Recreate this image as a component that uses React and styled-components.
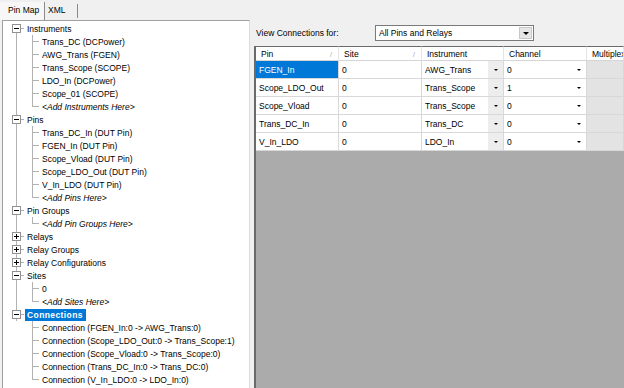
import React from "react"
import styled, { createGlobalStyle, css } from "styled-components"

const GlobalStyle = createGlobalStyle`
  html, body {
    margin: 0;
    padding: 0;
  }
  body {
    background: #f0f0f0;
    font-family: "Liberation Sans", Arial, sans-serif;
    font-size: 8.5px;
    color: #000;
    overflow: hidden;
  }
`

const tree = [
  {
    label: "Instruments",
    open: true,
    children: [
      "Trans_DC (DCPower)",
      "AWG_Trans (FGEN)",
      "Trans_Scope (SCOPE)",
      "LDO_In (DCPower)",
      "Scope_01 (SCOPE)",
      { label: "<Add Instruments Here>", add: true },
    ],
  },
  {
    label: "Pins",
    open: true,
    children: [
      "Trans_DC_In (DUT Pin)",
      "FGEN_In (DUT Pin)",
      "Scope_Vload (DUT Pin)",
      "Scope_LDO_Out (DUT Pin)",
      "V_In_LDO (DUT Pin)",
      { label: "<Add Pins Here>", add: true },
    ],
  },
  {
    label: "Pin Groups",
    open: true,
    children: [{ label: "<Add Pin Groups Here>", add: true }],
  },
  { label: "Relays", open: false, children: [] },
  { label: "Relay Groups", open: false, children: [] },
  { label: "Relay Configurations", open: false, children: [] },
  {
    label: "Sites",
    open: true,
    children: ["0", { label: "<Add Sites Here>", add: true }],
  },
  {
    label: "Connections",
    open: true,
    selected: true,
    children: [
      "Connection (FGEN_In:0 -> AWG_Trans:0)",
      "Connection (Scope_LDO_Out:0 -> Trans_Scope:1)",
      "Connection (Scope_Vload:0 -> Trans_Scope:0)",
      "Connection (Trans_DC_In:0 -> Trans_DC:0)",
      "Connection (V_In_LDO:0 -> LDO_In:0)",
    ],
  },
]

const connections = [
  { pin: "FGEN_In", site: "0", instrument: "AWG_Trans", channel: "0" },
  { pin: "Scope_LDO_Out", site: "0", instrument: "Trans_Scope", channel: "1" },
  { pin: "Scope_Vload", site: "0", instrument: "Trans_Scope", channel: "0" },
  { pin: "Trans_DC_In", site: "0", instrument: "Trans_DC", channel: "0" },
  { pin: "V_In_LDO", site: "0", instrument: "LDO_In", channel: "0" },
]

const LINE = "#b2b2b2"

const Page = styled.div`
  width: 624px;
  height: 388px;
  display: flex;
  flex-direction: column;
  overflow: hidden;
`

/* - - - Tabs - - - */

const TabBar = styled.div`
  display: flex;
  height: 20px;
  flex: none;
`

const Tab = styled.div`
  box-sizing: border-box;
  width: ${p => p.$w}px;
  padding-left: ${p => p.$pad}px;
  margin-top: ${p => (p.$active ? 2 : 4)}px;
  height: ${p => (p.$active ? 18 : 14)}px;
  line-height: ${p => (p.$active ? 16 : 12)}px;
  border-right: 1px solid #8a8a8a;
  background: ${p => (p.$active ? "#f7f7f7" : "#f0f0f0")};
`

/* - - - Main - - - */

const Main = styled.div`
  flex: 1;
  display: flex;
  min-height: 0;
`

const TreePanel = styled.div`
  box-sizing: border-box;
  width: 248px;
  margin-left: 2px;
  flex: none;
  background: #fff;
  border-top: 1px solid #a0a0a0;
  border-left: 1px solid #a0a0a0;
  border-right: 1px solid #dcdcdc;
  padding-top: 1px;
  overflow: hidden;
`

const Row = styled.div`
  display: flex;
  align-items: center;
  height: 13px;
  padding-left: 5px;
  white-space: nowrap;
`

const Guide = styled.span`
  position: relative;
  flex: none;
  width: 16px;
  height: 13px;
  ${p =>
    p.$line &&
    css`
      &::before {
        content: "";
        position: absolute;
        left: 8px;
        top: 0;
        bottom: 0;
        border-left: 1px solid ${LINE};
      }
    `}
`

const Branch = styled.span`
  position: relative;
  flex: none;
  width: 16px;
  height: 13px;
  &::before {
    content: "";
    position: absolute;
    left: 8px;
    top: 0;
    height: ${p => (p.$last ? "7px" : "13px")};
    border-left: 1px solid ${LINE};
  }
  &::after {
    content: "";
    position: absolute;
    left: 8px;
    top: 6px;
    width: 7px;
    border-top: 1px solid ${LINE};
  }
`

const RootCell = styled.span`
  position: relative;
  flex: none;
  width: 16px;
  height: 13px;
  &::before {
    content: "";
    position: absolute;
    left: 8px;
    top: ${p => (p.$first ? "6px" : "0")};
    height: ${p => (p.$last && !p.$open ? "7px" : p.$first ? "7px" : "13px")};
    border-left: 1px solid ${LINE};
  }
  &::after {
    content: "";
    position: absolute;
    left: 12px;
    top: 6px;
    width: 4px;
    border-top: 1px solid ${LINE};
  }
`

const Toggle = styled.span`
  position: absolute;
  z-index: 1;
  left: 4px;
  top: 2px;
  box-sizing: border-box;
  width: 9px;
  height: 9px;
  border: 1px solid #919191;
  background: #fff;
  &::before {
    content: "";
    position: absolute;
    left: 1px;
    top: 3px;
    width: 5px;
    height: 1px;
    background: #000;
  }
  ${p =>
    !p.$open &&
    css`
      &::after {
        content: "";
        position: absolute;
        left: 3px;
        top: 1px;
        width: 1px;
        height: 5px;
        background: #000;
      }
    `}
`

const Label = styled.span`
  padding: 0 2px;
  line-height: 12px;
  margin-left: ${p => (p.$root ? 1 : 0)}px;
  font-style: ${p => (p.$add ? "italic" : "normal")};
  ${p =>
    p.$selected &&
    css`
      background: #0078d7;
      color: #fff;
      font-weight: bold;
      letter-spacing: 0.4px;
      padding-right: 3px;
    `}
`

/* - - - Right side - - - */

const RightPanel = styled.div`
  flex: 1;
  margin-left: 4px;
  display: flex;
  flex-direction: column;
  min-width: 0;
`

const FilterRow = styled.div`
  display: flex;
  align-items: center;
  height: 26px;
  flex: none;
  padding-left: 2px;
`

const FilterLabel = styled.span`
  width: 119px;
  flex: none;
`

const Combo = styled.div`
  box-sizing: border-box;
  width: 159px;
  height: 16px;
  border: 1px solid #7a7a7a;
  background: #fff;
  display: flex;
  align-items: center;
  padding: 1px;
`

const ComboText = styled.span`
  flex: 1;
  padding-left: 2px;
`

const ComboButton = styled.span`
  box-sizing: border-box;
  width: 13px;
  height: 12px;
  background: #e6e6e6;
  border: 1px solid #c8c8c8;
  display: flex;
  align-items: center;
  justify-content: center;
`

const Arrow = styled.span`
  width: 0;
  height: 0;
  border-left: ${p => p.$size}px solid transparent;
  border-right: ${p => p.$size}px solid transparent;
  border-top: ${p => p.$size}px solid #000;
`

const Grid = styled.div`
  flex: 1;
  display: grid;
  grid-template-columns: 83px 83px 82px 83px 1fr;
  grid-auto-rows: 18px;
  grid-template-rows: 15px;
  align-content: start;
  background: #ababab;
  border-left: 2px solid #6a6a6a;
  overflow: hidden;
`

const HeadCell = styled.div`
  box-sizing: border-box;
  display: flex;
  align-items: center;
  justify-content: space-between;
  padding: 1px 6px 0 5px;
  background: #fff;
  border-top: 1px solid #6a6a6a;
  border-right: 1px solid #e3e3e3;
  border-bottom: 1px solid #d5d5d5;
  white-space: nowrap;
  overflow: hidden;
`

const SortGlyph = styled.span`
  color: #a8a8a8;
  font-size: 7px;
`

const Cell = styled.div`
  box-sizing: border-box;
  display: flex;
  align-items: center;
  padding-left: 3px;
  background: ${p => (p.$selected ? "#0078d7" : p.$disabled ? "#e3e3e3" : "#fff")};
  color: ${p => (p.$selected ? "#fff" : "#000")};
  border-right: 1px solid #d8d8d8;
  border-bottom: 1px solid #d8d8d8;
  white-space: nowrap;
  overflow: hidden;
`

const CellText = styled.span`
  flex: 1;
`

const CellButton = styled.span`
  flex: none;
  width: 15px;
  align-self: stretch;
  display: flex;
  align-items: center;
  justify-content: center;
  background: ${p => (p.$shaded ? "#ededed" : "transparent")};
`

const TreeView = () => (
  <TreePanel>
    {tree.map((node, i) => {
      const first = i === 0
      const last = i === tree.length - 1
      return (
        <React.Fragment key={node.label}>
          <Row>
            <RootCell $first={first} $last={last} $open={node.open}>
              <Toggle $open={node.open} />
            </RootCell>
            <Label $root $selected={node.selected}>
              {node.label}
            </Label>
          </Row>
          {node.open &&
            node.children.map((child, j) => {
              const item = typeof child === "string" ? { label: child } : child
              return (
                <Row key={item.label}>
                  <Guide $line={!last} />
                  <Branch $last={j === node.children.length - 1} />
                  <Label $add={item.add}>{item.label}</Label>
                </Row>
              )
            })}
        </React.Fragment>
      )
    })}
  </TreePanel>
)

const ConnectionGrid = () => (
  <Grid>
    <HeadCell>
      Pin<SortGlyph>/</SortGlyph>
    </HeadCell>
    <HeadCell>
      Site<SortGlyph>/</SortGlyph>
    </HeadCell>
    <HeadCell>Instrument</HeadCell>
    <HeadCell>Channel</HeadCell>
    <HeadCell>Multiplexer</HeadCell>
    {connections.map((c, i) => (
      <React.Fragment key={c.pin}>
        <Cell $selected={i === 0}>{c.pin}</Cell>
        <Cell>{c.site}</Cell>
        <Cell>
          <CellText>{c.instrument}</CellText>
          <CellButton $shaded>
            <Arrow $size={2} />
          </CellButton>
        </Cell>
        <Cell>
          <CellText>{c.channel}</CellText>
          <CellButton>
            <Arrow $size={2} />
          </CellButton>
        </Cell>
        <Cell $disabled />
      </React.Fragment>
    ))}
  </Grid>
)

export default function App() {
  return (
    <>
      <GlobalStyle />
      <Page>
        <TabBar>
          <Tab $active $w={45} $pad={8}>
            Pin Map
          </Tab>
          <Tab $w={33} $pad={3}>
            XML
          </Tab>
        </TabBar>
        <Main>
          <TreeView />
          <RightPanel>
            <FilterRow>
              <FilterLabel>View Connections for:</FilterLabel>
              <Combo>
                <ComboText>All Pins and Relays</ComboText>
                <ComboButton>
                  <Arrow $size={3} />
                </ComboButton>
              </Combo>
            </FilterRow>
            <ConnectionGrid />
          </RightPanel>
        </Main>
      </Page>
    </>
  )
}
